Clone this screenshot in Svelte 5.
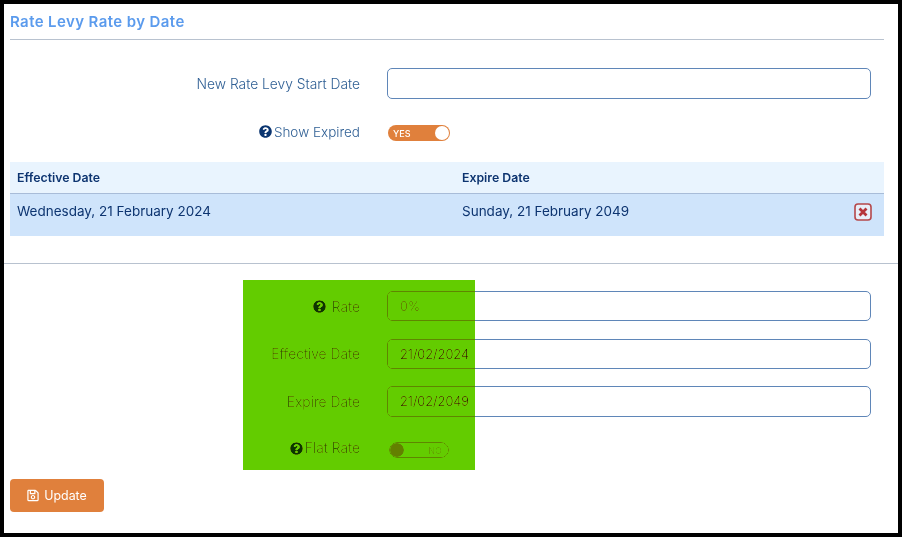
<script>
  const fields = [
    { label: 'Rate', value: '0%', help: true, spaced: true, soft: true },
    { label: 'Effective Date', value: '21/02/2024' },
    { label: 'Expire Date', value: '21/02/2049' }
  ];
</script>

{#snippet help()}
  <svg class="help" viewBox="0 0 512 512" aria-hidden="true"><path d="M504 256c0 137-111 248-248 248S8 393 8 256 119 8 256 8s248 111 248 248zM263 90c-54 0-89 23-116 63-4 5-3 12 2 16l35 26c5 4 13 3 17-2 18-23 30-36 58-36 21 0 46 13 46 33 0 15-12 23-33 34-23 14-55 31-55 73v7c0 7 5 12 12 12h56c7 0 12-5 12-12v-2c0-30 85-31 85-109 0-59-61-103-119-103zm-7 252c-26 0-47 21-47 47s21 47 47 47 47-21 47-47-21-47-47-47z"/></svg>
{/snippet}

<div class="frame">
  <h1>Rate Levy Rate by Date</h1>
  <div class="top-form">
    <div class="row first">
      <span class="label">New Rate Levy Start Date</span>
      <input class="field" type="text" />
    </div>
    <div class="row second">
      <span class="label tight">{@render help()}Show Expired</span>
      <span class="toggle on"><span class="tx">YES</span><span class="knob"></span></span>
    </div>
  </div>

  <div class="table">
    <div class="thead">
      <span class="c1">Effective Date</span>
      <span class="c2">Expire Date</span>
    </div>
    <div class="tbody">
      <span class="c1">Wednesday, 21 February 2024</span>
      <span class="c2">Sunday, 21 February 2049</span>
      <span class="del">
        <svg viewBox="0 0 18 18" aria-hidden="true">
          <rect x="1" y="1" width="16" height="16" rx="3" fill="#e8eef8" stroke="#b5474a" stroke-width="1.6"/>
          <path d="M5.500 5.500l7 7M12.500 5.500l-7 7" stroke="#b5343a" stroke-width="2.800" fill="none"/>
        </svg>
      </span>
    </div>
  </div>

  <hr />

  <div class="bottom-form">
    {#each fields as f}
      <div class="row fr">
        <span class="label" class:gap={f.spaced}>{#if f.help}{@render help()}{/if}{f.label}</span>
        <input class="field" class:soft={f.soft} type="text" value={f.value} />
      </div>
    {/each}
    <div class="row flat">
      <span class="label">{@render help()}Flat Rate</span>
      <span class="toggle off"><span class="knob"></span><span class="tx">NO</span></span>
    </div>
  </div>

  <button class="update" type="button">
    <svg viewBox="0 0 448 512" aria-hidden="true"><path d="M433.941 129.941l-83.882-83.882A48 48 0 0 0 316.118 32H48C21.490 32 0 53.490 0 80v352c0 26.510 21.490 48 48 48h352c26.510 0 48-21.490 48-48V163.882a48 48 0 0 0-14.059-33.941zM272 80v80H144V80h128zm122 352H54a6 6 0 0 1-6-6V86a6 6 0 0 1 6-6h42v104c0 13.255 10.745 24 24 24h176c13.255 0 24-10.745 24-24V83.882l78.243 78.243a6 6 0 0 1 1.757 4.243V426a6 6 0 0 1-6 6zM224 232c-48.523 0-88 39.477-88 88s39.477 88 88 88 88-39.477 88-88-39.477-88-88-88zm0 128c-22.056 0-40-17.944-40-40s17.944-40 40-40 40 17.944 40 40-17.944 40-40 40z"/></svg>
    Update
  </button>

  <div class="overlay"></div>
</div>

<style>
  :global(body) { margin: 0; background: #000; }
  .frame {
    position: relative;
    box-sizing: border-box;
    width: 902px;
    height: 537px;
    border: 4px solid #000;
    background: #fff;
    padding: 0 6px;
    font-family: Inter, "Liberation Sans", sans-serif;
    color: #3a6391;
    overflow: hidden;
  }
  h1 {
    margin: 0 8px 0 0;
    height: 36px;
    box-sizing: border-box;
    padding-top: 9px;
    font-size: 15px;
    line-height: 18px;
    font-weight: 600;
    color: #5b9bed;
    letter-spacing: 0.4px;
    border-bottom: 1px solid #b8c2cf;
  }
  .row {
    display: grid;
    grid-template-columns: 350px 484px;
    column-gap: 27px;
    align-items: center;
  }
  .top-form { padding-top: 28px; }
  .second { margin-top: 21px; height: 26px; }
  .second .label { padding-bottom: 3px; }
  .label {
    display: flex;
    justify-content: flex-end;
    align-items: center;
    font-size: 13.8px;
    font-weight: 300;
    line-height: 20px;
    color: #2f5f94;
  }
  .label.tight { font-size: 13.5px; }
  .fr:first-child .label { padding-top: 1px; }
  .help { width: 13px; height: 13px; fill: #0b3570; margin-right: 2px; flex: none; }
  .label.gap .help { margin-right: 6px; }
  .field {
    box-sizing: border-box;
    width: 484px;
    height: 31px;
    padding: 0 12px;
    border: 1px solid #5f86b8;
    border-radius: 5px;
    background: #fff;
    font: 300 12.8px Inter, "Liberation Sans", sans-serif;
    color: #1c2733;
    outline: none;
  }
  .field.soft { color: #5a6a7a; }
  .toggle {
    position: relative;
    display: flex;
    align-items: center;
    box-sizing: border-box;
    height: 16px;
    border-radius: 8px;
    font-size: 9px;
    font-weight: 500;
  }
  .on {
    width: 62px;
    margin-left: 1px;
    background: #e0803c;
    color: #fff;
    padding-left: 5px;
  }
  .on .knob {
    position: absolute;
    right: 1px;
    top: 1px;
    width: 14px;
    height: 14px;
    border-radius: 50%;
    background: #fff;
  }
  .off {
    width: 60px;
    margin-left: 2px;
    border: 1px solid #5f86b8;
    color: #8aa0b8;
    justify-content: space-between;
    padding-right: 6px;
  }
  .off .knob {
    width: 14px;
    height: 14px;
    border-radius: 50%;
    background: #e0803c;
  }
  .table { margin: 16px 8px 0 0; font-size: 13.5px; }
  .thead, .tbody {
    display: grid;
    grid-template-columns: 445px 1fr 30px;
    padding-left: 7px;
    color: #0d3470;
  }
  .thead {
    height: 32px;
    box-sizing: border-box;
    align-items: center;
    background: #e9f4fe;
    border-bottom: 1px solid #a8bcd8;
    font-size: 12.3px;
    font-weight: 600;
  }
  .tbody {
    height: 42px;
    box-sizing: border-box;
    background: #cfe4fb;
    padding-top: 8px;
    line-height: 18px;
  }
  .del { display: block; width: 18px; height: 18px; margin: 1px 0 0 0; }
  .del svg { display: block; width: 18px; height: 18px; }
  hr {
    margin: 27px -6px 0;
    height: 1px;
    border: 0;
    background: #b8c2cf;
  }
  .bottom-form { padding-top: 27px; }
  .fr { margin-bottom: 18px; height: 30px; }
  .fr:nth-child(2) { margin-bottom: 17px; }
  .fr:nth-child(3) { height: 31px; margin-bottom: 0; }
  .fr .field { height: 100%; }
  .flat { margin-top: 25px; grid-template-rows: 16px; height: 16px; }
  .flat .label { margin-bottom: 4px; }
  .update {
    display: flex;
    align-items: center;
    justify-content: center;
    gap: 5px;
    margin-top: 21px;
    width: 94px;
    height: 33px;
    padding: 0;
    border: 0;
    border-radius: 4px;
    background: #e0803c;
    color: #fff;
    font: 400 12.4px Inter, "Liberation Sans", sans-serif;
  }
  .update svg { width: 12px; height: 13px; fill: #fff; }
  .overlay {
    position: absolute;
    left: 239px;
    top: 276px;
    width: 232px;
    height: 190px;
    background: #63cc00;
    mix-blend-mode: darken;
    pointer-events: none;
  }
</style>
